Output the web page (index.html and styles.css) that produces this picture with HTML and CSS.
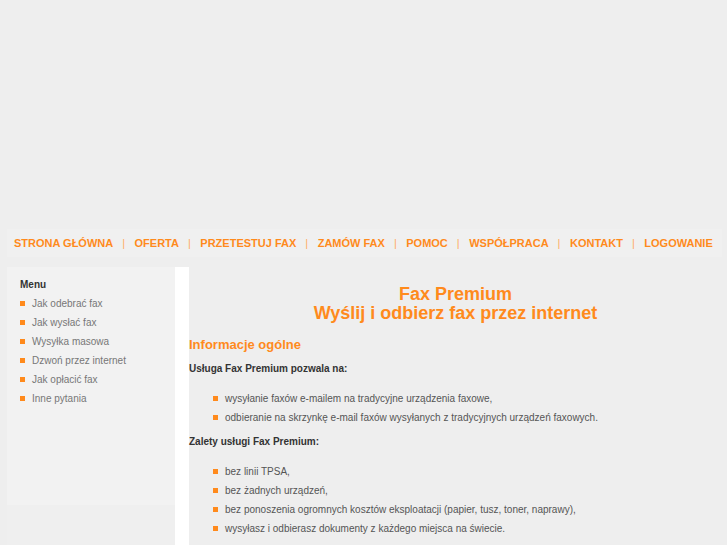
FILE: index.html
```html
<!DOCTYPE html>
<html lang="pl">
<head>
    <meta charset="UTF-8">
    <title>Fax Premium - Wyślij i odbierz fax przez internet</title>
    <link rel="stylesheet" href="styles.css">
</head>
<body>
<div class="page">
    <div class="header"></div>

    <nav class="navbar">
        <a href="#">STRONA GŁÓWNA</a><span class="sep">|</span>
        <a href="#">OFERTA</a><span class="sep">|</span>
        <a href="#">PRZETESTUJ FAX</a><span class="sep">|</span>
        <a href="#">ZAMÓW FAX</a><span class="sep">|</span>
        <a href="#">POMOC</a><span class="sep">|</span>
        <a href="#">WSPÓŁPRACA</a><span class="sep">|</span>
        <a href="#">KONTAKT</a><span class="sep">|</span>
        <a href="#">LOGOWANIE</a>
    </nav>

    <div class="content">
        <div class="side-col">
            <div class="sidebar">
                <h3>Menu</h3>
                <ul class="menu">
                    <li><a href="#">Jak odebrać fax</a></li>
                    <li><a href="#">Jak wysłać fax</a></li>
                    <li><a href="#">Wysyłka masowa</a></li>
                    <li><a href="#">Dzwoń przez internet</a></li>
                    <li><a href="#">Jak opłacić fax</a></li>
                    <li><a href="#">Inne pytania</a></li>
                </ul>
            </div>
        </div>

        <div class="main">
            <h1>Fax Premium<br>Wyślij i odbierz fax przez internet</h1>
            <h2>Informacje ogólne</h2>
            <p class="lead">Usługa Fax Premium pozwala na:</p>
            <ul class="bullets">
                <li>wysyłanie faxów e-mailem na tradycyjne urządzenia faxowe,</li>
                <li>odbieranie na skrzynkę e-mail faxów wysyłanych z tradycyjnych urządzeń faxowych.</li>
            </ul>
            <p class="lead">Zalety usługi Fax Premium:</p>
            <ul class="bullets">
                <li>bez linii TPSA,</li>
                <li>bez żadnych urządzeń,</li>
                <li>bez ponoszenia ogromnych kosztów eksploatacji (papier, tusz, toner, naprawy),</li>
                <li>wysyłasz i odbierasz dokumenty z każdego miejsca na świecie.</li>
            </ul>
        </div>
    </div>
</div>
</body>
</html>
```

FILE: styles.css
```css
:root {
    --orange: #ff8a1c;
    --panel: #f2f2f2;
}

body {
    margin: 0;
    background-color: #eeeeee;
    font-family: "Liberation Sans", Arial, sans-serif;
    color: #555;
}

.page {
    width: 715px;
    margin-left: 7px;
}

.header {
    height: 229px;
}

/* top menu */
.navbar {
    display: flex;
    align-items: center;
    height: 28px;
    padding-left: 7px;
    background-color: #f0f0f0;
    font-size: 11px;
    font-weight: bold;
    white-space: nowrap;
}

.navbar a {
    flex-shrink: 0;
    color: var(--orange);
    text-decoration: none;
}

.navbar .sep {
    flex-shrink: 0;
    color: #ffac66;
    font-weight: normal;
    padding: 0 9.5px 0 9px;
}

.content {
    display: flex;
    margin-top: 10px;
    min-height: 278px;
}

.side-col {
    width: 168px;
    background-color: #efefef;
    border-right: 14px solid #fff;
}

.sidebar {
    height: 238px;
    box-sizing: border-box;
    padding: 8px 13px;
    background-color: var(--panel);
}

.sidebar h3 {
    margin: 0;
    font-size: 10px;
    line-height: 19px;
    color: #333;
}

.menu, .bullets {
    list-style: none;
    margin: 0;
    padding: 0;
}

.menu li, .bullets li {
    position: relative;
    line-height: 19px;
    font-size: 10px;
}

.menu li {
    padding-left: 12px;
}

.menu li::before, .bullets li::before {
    content: "";
    position: absolute;
    left: 0;
    top: 7px;
    width: 5px;
    height: 5px;
    background-color: var(--orange);
}

.menu a {
    color: #777;
    text-decoration: none;
}

.main {
    flex: 1;
}

.main h1 {
    margin: 18px 0 0;
    text-align: center;
    font-size: 18px;
    line-height: 19px;
    color: var(--orange);
}

.main h2 {
    margin: 12px 0 0;
    font-size: 13px;
    line-height: 19px;
    color: var(--orange);
}

.lead {
    margin: 5px 0 11px;
    font-size: 10px;
    font-weight: bold;
    line-height: 19px;
    color: #333;
}

.bullets {
    margin-bottom: 2px;
    padding-left: 24px;
}

.bullets li {
    padding-left: 12px;
}
```
